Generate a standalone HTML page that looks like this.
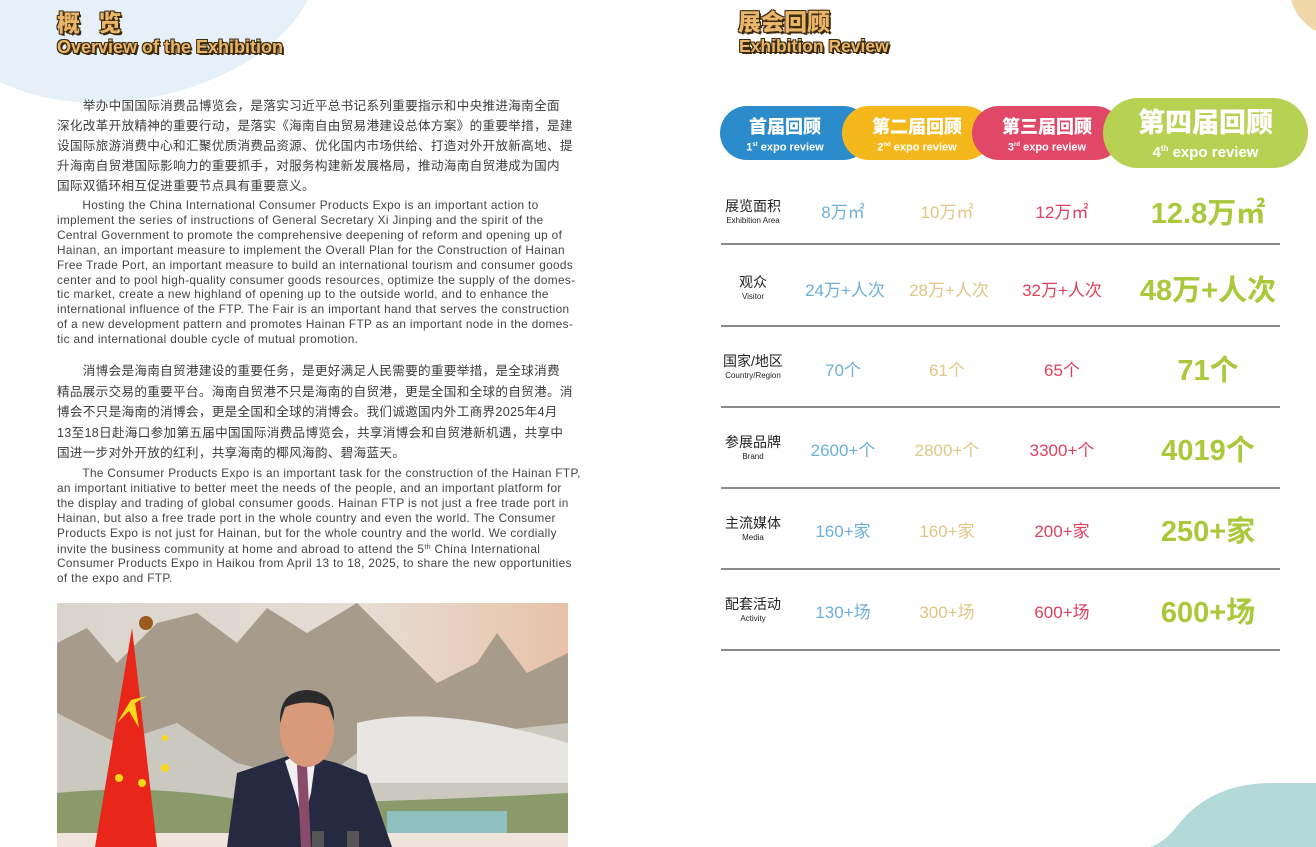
<!DOCTYPE html>
<html><head><meta charset="utf-8"><style>
*{margin:0;padding:0;box-sizing:border-box}
html,body{width:1316px;height:847px;overflow:hidden}
body{position:relative;background:#fff;font-family:"Liberation Sans","Noto Sans CJK SC",sans-serif;color:#3c3c3c}
.a{position:absolute}
.h{color:#eab66a;font-weight:900;text-shadow:-1px -1px 0 #3a2a10,1px -1px 0 #3a2a10,-1px 1px 0 #3a2a10,1px 1px 0 #3a2a10,2px 2px 0 #3a2a10;white-space:nowrap}
.cn{font-size:12.6px;line-height:20px;letter-spacing:0.3px;white-space:nowrap}
.en{font-size:11.8px;letter-spacing:0.35px;line-height:14.9px;white-space:nowrap;color:#444}
.pill{position:absolute;border-radius:30px;color:#fff;text-align:center;font-weight:bold}
.pill b{display:block;font-size:18px;line-height:22px}
.pill i{display:block;font-style:normal;font-size:11px;line-height:14px}
.lab{position:absolute;left:700px;width:106px;text-align:center}
.lab b{display:block;font-weight:normal;font-size:14px;color:#222}
.lab i{display:block;font-style:normal;font-size:8px;color:#222}
.v{position:absolute;text-align:center;font-size:17px;width:150px}
.g{position:absolute;text-align:center;font-size:29px;font-weight:bold;color:#a9c83a;width:220px;left:1098px}
.ln{position:absolute;left:721px;width:559px;height:2px;background:#8a8a8a}
</style></head><body>
<div class="a" style="left:-60px;top:-140px;width:380px;height:240px;border-radius:0 0 60% 50%;background:#e5f0f8;transform:rotate(-6deg)"></div>
<div class="a" style="left:1290px;top:-60px;width:120px;height:100px;border-radius:50%;background:#f0d6a9"></div>
<svg class="a" style="left:1140px;top:770px" width="176" height="77" viewBox="0 0 176 77"><path d="M10 77 Q25 72 38 55 Q70 14 130 13 L176 13 V77Z" fill="#b3dad8"/></svg>

<div class="a h" style="left:57px;top:4px;font-size:23px;letter-spacing:6px">概 览</div>
<div class="a h" style="left:57px;top:37px;font-size:18px">Overview of the Exhibition</div>
<div class="a h" style="left:738px;top:3px;font-size:23px">展会回顾</div>
<div class="a h" style="left:739px;top:36px;font-size:17.5px">Exhibition Review</div>

<div class="a cn" style="left:57px;top:96px">　　举办中国国际消费品博览会，是落实习近平总书记系列重要指示和中央推进海南全面<br>深化改革开放精神的重要行动，是落实《海南自由贸易港建设总体方案》的重要举措，是建<br>设国际旅游消费中心和汇聚优质消费品资源、优化国内市场供给、打造对外开放新高地、提<br>升海南自贸港国际影响力的重要抓手，对服务构建新发展格局，推动海南自贸港成为国内<br>国际双循环相互促进重要节点具有重要意义。</div>
<div class="a en" style="left:57px;top:198px">&nbsp;&nbsp;&nbsp;&nbsp;&nbsp;&nbsp;&nbsp;Hosting the China International Consumer Products Expo is an important action to<br>implement the series of instructions of General Secretary Xi Jinping and the spirit of the<br>Central Government to promote the comprehensive deepening of reform and opening up of<br>Hainan, an important measure to implement the Overall Plan for the Construction of Hainan<br>Free Trade Port, an important measure to build an international tourism and consumer goods<br>center and to pool high-quality consumer goods resources, optimize the supply of the domes-<br>tic market, create a new highland of opening up to the outside world, and to enhance the<br>international influence of the FTP. The Fair is an important hand that serves the construction<br>of a new development pattern and promotes Hainan FTP as an important node in the domes-<br>tic and international double cycle of mutual promotion.</div>
<div class="a cn" style="left:57px;top:361px;line-height:20.5px">　　消博会是海南自贸港建设的重要任务，是更好满足人民需要的重要举措，是全球消费<br>精品展示交易的重要平台。海南自贸港不只是海南的自贸港，更是全国和全球的自贸港。消<br>博会不只是海南的消博会，更是全国和全球的消博会。我们诚邀国内外工商界2025年4月<br>13至18日赴海口参加第五届中国国际消费品博览会，共享消博会和自贸港新机遇，共享中<br>国进一步对外开放的红利，共享海南的椰风海韵、碧海蓝天。</div>
<div class="a en" style="left:57px;top:466px">&nbsp;&nbsp;&nbsp;&nbsp;&nbsp;&nbsp;&nbsp;The Consumer Products Expo is an important task for the construction of the Hainan FTP,<br>an important initiative to better meet the needs of the people, and an important platform for<br>the display and trading of global consumer goods. Hainan FTP is not just a free trade port in<br>Hainan, but also a free trade port in the whole country and even the world. The Consumer<br>Products Expo is not just for Hainan, but for the whole country and the world. We cordially<br>invite the business community at home and abroad to attend the 5<span style="font-size:7px;vertical-align:4px">th</span> China International<br>Consumer Products Expo in Haikou from April 13 to 18, 2025, to share the new opportunities<br>of the expo and FTP.</div>

<svg class="a" style="left:57px;top:603px" width="511" height="244" viewBox="0 0 511 244">
<defs><linearGradient id="sky" x1="0" y1="0" x2="1" y2="0"><stop offset="0" stop-color="#d9d4cc"/><stop offset=".6" stop-color="#e6ddd4"/><stop offset="1" stop-color="#e8c2a8"/></linearGradient></defs>
<rect width="511" height="244" fill="url(#sky)"/>
<path d="M0 40 L30 25 60 60 100 20 140 10 180 40 210 5 250 30 300 0 340 40 380 80 420 60 440 30 470 70 511 50 V200 H0Z" fill="#a79c8c"/>
<path d="M0 110 L60 140 120 120 180 160 260 180 300 150 360 140 420 130 511 120 V200 H0Z" fill="#cbc8c0"/>
<path d="M300 120 Q380 100 511 140 V180 H300Z" fill="#e8e6e2"/>
<path d="M0 190 Q100 180 200 200 Q330 200 511 190 V230 H0Z" fill="#8a9a6a"/>
<rect x="330" y="208" width="120" height="22" fill="#8ec0c0"/>
<rect y="230" width="511" height="14" fill="#eee4da"/>
<path d="M75 25 L100 244 H38Z" fill="#e8261a"/>
<circle cx="89" cy="20" r="7" fill="#9a5a20"/>
<polygon points="90,93 78,100 82,125 72,108 60,120 74,97" fill="#f8d81a"/>
<circle cx="62" cy="175" r="4" fill="#f8d81a"/><circle cx="85" cy="180" r="4" fill="#f8d81a"/><circle cx="108" cy="165" r="4" fill="#f8d81a"/><circle cx="108" cy="135" r="3" fill="#f8d81a"/>
<path d="M170 244 L180 170 L210 160 L240 150 L280 160 L310 172 L335 244Z" fill="#262a40"/>
<path d="M228 158 L242 150 L258 160 L254 190 L246 220 L238 190Z" fill="#f0f0f0"/>
<path d="M240 162 L250 162 L254 244 L244 244Z" fill="#8a4a6a"/>
<ellipse cx="250" cy="128" rx="27" ry="36" fill="#d89a7a"/>
<path d="M223 120 Q222 88 250 87 Q278 88 277 118 L272 104 Q250 95 228 104Z" fill="#2a2a2a"/>
<rect x="255" y="228" width="12" height="16" fill="#555"/><rect x="290" y="228" width="12" height="16" fill="#555"/>
</svg>

<div class="pill" style="left:720px;top:106px;width:150px;height:54px;background:#2c8bcb;padding:10px 20px 0 0"><b>首届回顾</b><i>1<sup style="font-size:6px">st</sup> expo review</i></div>
<div class="pill" style="left:842px;top:106px;width:150px;height:54px;background:#f4b81c;padding:10px 0 0 0"><b>第二届回顾</b><i>2<sup style="font-size:6px">nd</sup> expo review</i></div>
<div class="pill" style="left:972px;top:106px;width:150px;height:54px;background:#e14766;padding:10px 0 0 0"><b>第三届回顾</b><i>3<sup style="font-size:6px">rd</sup> expo review</i></div>
<div class="pill" style="left:1103px;top:98px;width:205px;height:70px;border-radius:36px;background:#b7d253;padding:9px 0 0 0"><b style="font-size:27px;line-height:32px">第四届回顾</b><i style="font-size:15px;line-height:20px">4<sup style="font-size:8px">th</sup> expo review</i></div>

<div class="lab" style="top:196px"><b>展览面积</b><i>Exhibition Area</i></div>
<div class="lab" style="top:272px"><b>观众</b><i>Visitor</i></div>
<div class="lab" style="top:351px"><b>国家/地区</b><i>Country/Region</i></div>
<div class="lab" style="top:432px"><b>参展品牌</b><i>Brand</i></div>
<div class="lab" style="top:513px"><b>主流媒体</b><i>Media</i></div>
<div class="lab" style="top:594px"><b>配套活动</b><i>Activity</i></div>

<div class="v" style="left:768px;top:198px;color:#6cb0da">8万㎡</div><div class="v" style="left:872px;top:198px;color:#e1c685">10万㎡</div><div class="v" style="left:987px;top:198px;color:#e0405e">12万㎡</div><div class="g" style="top:190px">12.8万㎡</div>
<div class="v" style="left:770px;top:276px;color:#6cb0da">24万+人次</div><div class="v" style="left:874px;top:276px;color:#e1c685">28万+人次</div><div class="v" style="left:987px;top:276px;color:#e0405e">32万+人次</div><div class="g" style="top:267px">48万+人次</div>
<div class="v" style="left:768px;top:356px;color:#6cb0da">70个</div><div class="v" style="left:872px;top:356px;color:#e1c685">61个</div><div class="v" style="left:987px;top:356px;color:#e0405e">65个</div><div class="g" style="top:347px">71个</div>
<div class="v" style="left:768px;top:436px;color:#6cb0da">2600+个</div><div class="v" style="left:872px;top:436px;color:#e1c685">2800+个</div><div class="v" style="left:987px;top:436px;color:#e0405e">3300+个</div><div class="g" style="top:427px">4019个</div>
<div class="v" style="left:768px;top:517px;color:#6cb0da">160+家</div><div class="v" style="left:872px;top:517px;color:#e1c685">160+家</div><div class="v" style="left:987px;top:517px;color:#e0405e">200+家</div><div class="g" style="top:508px">250+家</div>
<div class="v" style="left:768px;top:598px;color:#6cb0da">130+场</div><div class="v" style="left:872px;top:598px;color:#e1c685">300+场</div><div class="v" style="left:987px;top:598px;color:#e0405e">600+场</div><div class="g" style="top:589px">600+场</div>

<div class="ln" style="top:243px"></div><div class="ln" style="top:325px"></div><div class="ln" style="top:406px"></div><div class="ln" style="top:487px"></div><div class="ln" style="top:568px"></div><div class="ln" style="top:649px"></div>
</body></html>
